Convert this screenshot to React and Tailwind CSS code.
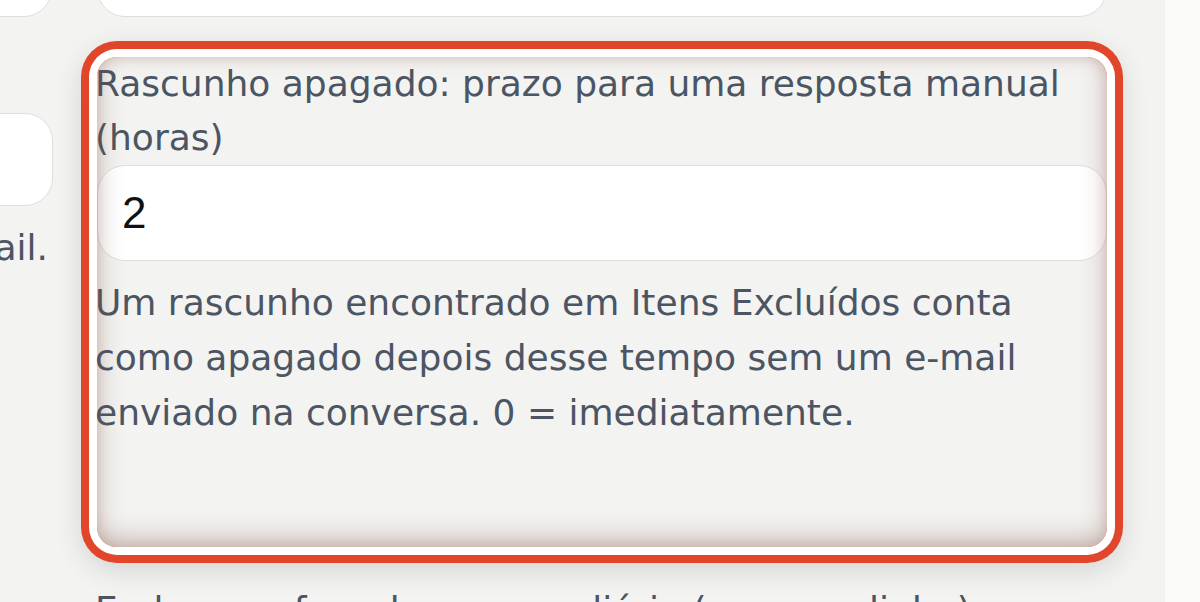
export default function App() {
  return (
    <div className="flex h-[602px] w-[1200px] overflow-hidden bg-[#fbfbfa] font-['DejaVu_Sans',sans-serif]">
      <div className="h-[602px] w-[1165px] shrink-0 overflow-hidden bg-[#f3f3f1]">
        <div className="ml-[-400px] mt-[-79px] grid grid-cols-[453px_1010px] gap-x-[44px] gap-y-[35px] text-[36px] leading-[55px] text-[#4b5563]">
          {/* row 1 */}
          <div className="pb-[5px]">
            <div className="h-[96px] w-[452px] rounded-[28px] border border-[#dededb] bg-white" />
          </div>
          <div className="pb-[5px]">
            <div className="h-[96px] rounded-[28px] border border-[#dededb] bg-white" />
          </div>

          {/* row 2 */}
          <div className="flex flex-col">
            <label className="block leading-[56px]">Resumo</label>
            <div className="h-[93px] w-[453px] rounded-[28px] border border-[#dededb] bg-white" />
            <p className="mt-[14px] whitespace-nowrap pr-[5px] text-right">Enviado por e-mail.</p>
          </div>
          <div className="relative rounded-[20px] pb-[107px] shadow-[0_0_0_8px_#ffffff,0_0_0_16px_#e1462b,0_8px_28px_16px_rgba(0,0,0,0.12)]">
            <label className="-ml-[2px] block leading-[54px]">Rascunho apagado: prazo para uma resposta manual (horas)</label>
            <input
              type="text"
              defaultValue="2"
              className="block h-[96px] w-full rounded-[28px] border border-[#dededb] bg-white px-[24px] font-['Liberation_Sans',sans-serif] text-[44px] text-[#111111] outline-none"
            />
            <p className="-ml-[2px] mt-[14px]">
              Um rascunho encontrado em Itens Excluídos conta como apagado depois desse tempo sem um e-mail enviado na conversa. 0 = imediatamente.
            </p>
            <div className="pointer-events-none absolute inset-0 rounded-[20px] shadow-[inset_0_-8px_26px_rgba(120,70,60,0.34),inset_0_0_12px_rgba(170,100,90,0.22)]" />
          </div>

          {/* row 3 */}
          <div />
          <div>
            <label className="-ml-[2px] block">Endereços fora do resumo diário (uma por linha)</label>
          </div>
        </div>
      </div>
    </div>
  );
}
